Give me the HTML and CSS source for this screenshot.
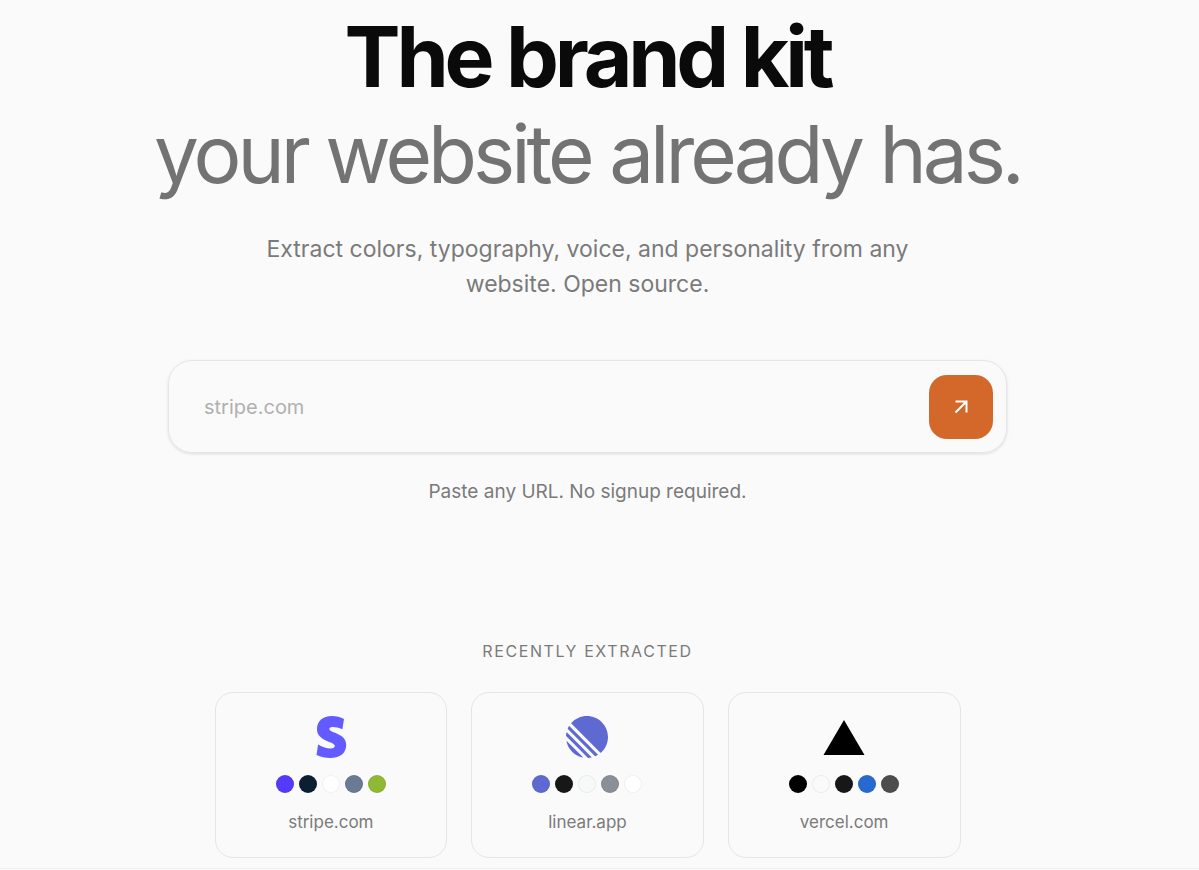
FILE: index.html
```html
<!DOCTYPE html>
<html lang="en">
  <head>
    <meta charset="UTF-8" />
    <meta name="viewport" content="width=device-width, initial-scale=1" />
    <title>The brand kit your website already has.</title>
    <link rel="stylesheet" href="styles.css">
  </head>
  <body>
    <main class="page">
      <section class="hero">
        <h1 class="hero-title">
          <span class="hero-strong">The brand kit</span>
          <span class="hero-muted">your website already has.</span>
        </h1>
        <p class="hero-text">
          Extract colors, typography, voice, and personality from any website.
          Open source.
        </p>

        <form class="url-form">
          <input
            class="url-input"
            name="url"
            type="text"
            placeholder="stripe.com"
            aria-label="Website URL"
          />
          <button class="url-submit" type="submit" aria-label="Extract">
            <svg width="20" height="20" viewBox="0 0 20 20" fill="none" stroke="currentColor" stroke-width="2">
              <path d="M4.5 15.5 15.5 4.5M4.5 4.5h11v11" />
            </svg>
          </button>
        </form>
        <p class="hint">Paste any URL. No signup required.</p>
      </section>

      <section class="recent">
        <h2 class="recent-title">Recently extracted</h2>
        <div class="cards">
          <a class="card" href="#stripe">
            <svg class="card-logo" viewBox="1 0 42 42" fill="#635bff">
              <path d="M35 3 33.4 13.2C29.5 11.6 26 10.8 23.4 11c-2.6.2-3.6 1.400-2.700 2.900C22.500 17 37.200 17.600 37.200 28.600 37.200 37.500 31.200 42 21.200 42c-4.700 0-9.300-.8-13.700-2.900L9.100 28.500c4.400 2.500 8.600 3.900 12.500 3.900 2.700 0 4.200-.9 4.200-2.500C25.800 25.500 8 25.500 8 13.300 8 5 13.800 0 23 0c4.500 0 8.300 1 12 3Z" />
            </svg>
            <span class="swatches">
              <i class="swatch stripe-violet"></i>
              <i class="swatch stripe-navy"></i>
              <i class="swatch white"></i>
              <i class="swatch stripe-slate"></i>
              <i class="swatch stripe-green"></i>
            </span>
            <span class="card-name">stripe.com</span>
          </a>

          <a class="card" href="#linear">
            <svg class="card-logo" viewBox="0 0 100 100" fill="#5e6ad2">
              <path d="M1.225 61.523c-.222-.949.908-1.546 1.597-.857l36.512 36.512c.69.690.092 1.820-.857 1.597-18.425-4.323-32.930-18.827-37.252-37.252ZM.002 46.889a.99.990 0 0 0 .290.760L52.351 99.708c.201.201.477.307.760.290 2.370-.149 4.695-.460 6.963-.927.765-.157 1.030-1.096.478-1.648L2.576 39.448c-.552-.552-1.491-.286-1.648.479a50.067 50.067 0 0 0-.926 6.962ZM4.210 29.705a.988.988 0 0 0 .208 1.100l64.776 64.776c.289.290.726.375 1.100.208a49.908 49.908 0 0 0 5.185-2.684.981.981 0 0 0 .183-1.540L8.436 24.336a.981.981 0 0 0-1.541.183 49.896 49.896 0 0 0-2.684 5.186Zm8.448-11.631a.986.986 0 0 1-.045-1.354C21.780 6.460 35.111 0 49.952 0 77.592 0 100 22.407 100 50.048c0 14.840-6.460 28.172-16.720 37.338a.986.986 0 0 1-1.354-.045L12.659 18.074Z" />
            </svg>
            <span class="swatches">
              <i class="swatch linear-indigo"></i>
              <i class="swatch ink"></i>
              <i class="swatch linear-light"></i>
              <i class="swatch linear-gray"></i>
              <i class="swatch white"></i>
            </span>
            <span class="card-name">linear.app</span>
          </a>

          <a class="card" href="#vercel">
            <svg class="card-logo" viewBox="0 0 42 42" fill="#000">
              <path d="M21 4 41.500 39h-41Z" />
            </svg>
            <span class="swatches">
              <i class="swatch black"></i>
              <i class="swatch vercel-light"></i>
              <i class="swatch ink"></i>
              <i class="swatch vercel-blue"></i>
              <i class="swatch vercel-gray"></i>
            </span>
            <span class="card-name">vercel.com</span>
          </a>
        </div>
      </section>
    </main>
    <footer class="footer"></footer>
  </body>
</html>
```

FILE: styles.css
```css
* {
  box-sizing: border-box;
}
body {
  margin: 0;
  background: #fafafa;
  color: #0a0a0a;
  font-family: Inter, "Liberation Sans", sans-serif;
  overflow: hidden;
}
h1,
h2,
p {
  margin: 0;
}

.page {
  padding: 8px 24px 10px 0;
}

/* Hero */
.hero {
  display: flex;
  flex-direction: column;
  align-items: center;
  text-align: center;
}
.hero-title {
  font-size: 84px;
  line-height: 97px;
  letter-spacing: -0.05em;
}
.hero-title span {
  display: block;
}
.hero-strong {
  font-weight: 700;
}
.hero-muted {
  font-size: 80px;
  font-weight: 400;
  letter-spacing: -0.05em;
  color: #737373;
}
.hero-text {
  max-width: 680px;
  margin-top: 30px;
  font-size: 23px;
  line-height: 35px;
  color: #7a7a7a;
}

/* URL form */
.url-form {
  display: flex;
  align-items: center;
  width: 100%;
  max-width: 839px;
  margin-top: 58px;
  padding: 13px;
  border: 1px solid #e5e5e5;
  border-radius: 24px;
  box-shadow: 0 1px 3px rgba(0, 0, 0, 0.12);
}
.url-input {
  flex: 1;
  min-width: 0;
  height: 65px;
  padding: 0 22px;
  border: none;
  outline: none;
  background: none;
  font: inherit;
  font-size: 20px;
  color: #0a0a0a;
}
.url-input::placeholder {
  color: #b0b0b0;
}
.url-submit {
  display: flex;
  align-items: center;
  justify-content: center;
  width: 64px;
  height: 64px;
  padding: 0;
  border: none;
  border-radius: 18px;
  background: #d4672a;
  color: #fff;
  cursor: pointer;
}
.hint {
  margin-top: 25px;
  font-size: 19px;
  line-height: 28px;
  color: #7a7a7a;
}

/* Recently extracted */
.recent {
  margin-top: 133px;
}
.recent-title {
  font-size: 16px;
  font-weight: 400;
  line-height: 24px;
  letter-spacing: 0.1em;
  text-align: center;
  text-transform: uppercase;
  color: #7a7a7a;
}
.cards {
  display: grid;
  grid-template-columns: repeat(3, 1fr);
  gap: 24px;
  max-width: 746px;
  margin: 29px auto 0;
}
.card {
  display: flex;
  flex-direction: column;
  align-items: center;
  gap: 17px;
  padding: 23px;
  border: 1px solid #e5e5e5;
  border-radius: 18px;
  color: #7a7a7a;
  text-decoration: none;
}
.card-logo {
  width: 42px;
  height: 42px;
}
.card-name {
  font-size: 17px;
  line-height: 24px;
}
.swatches {
  display: flex;
  gap: 5px;
}
.swatch {
  width: 18px;
  height: 18px;
  border: 1px solid rgba(0, 0, 0, 0.06);
  border-radius: 50%;
}
.white {
  background: #fff;
}
.black {
  background: #000;
}
.ink {
  background: #171717;
}
.stripe-violet {
  background: #533afd;
}
.stripe-navy {
  background: #0b1f33;
}
.stripe-slate {
  background: #6b7a94;
}
.stripe-green {
  background: #8fb935;
}
.linear-indigo {
  background: #5e6ad2;
}
.linear-light {
  background: #f7f8f8;
}
.linear-gray {
  background: #8a8f98;
}
.vercel-light {
  background: #fafafa;
}
.vercel-blue {
  background: #2869d0;
}
.vercel-gray {
  background: #4d4d4d;
}

.footer {
  height: 40px;
  border-top: 1px solid #f0f0f0;
}
```
